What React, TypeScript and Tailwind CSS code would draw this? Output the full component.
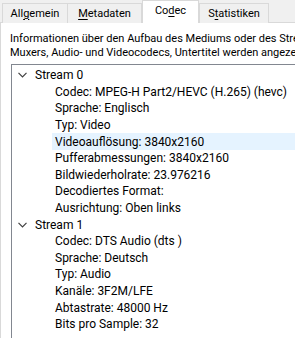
import React from "react";

type Row = { label: string; level: 0 | 1; selected?: boolean };

const rows: Row[] = [
  { label: "Stream 0", level: 0 },
  { label: "Codec: MPEG-H Part2/HEVC (H.265) (hevc)", level: 1 },
  { label: "Sprache: Englisch", level: 1 },
  { label: "Typ: Video", level: 1 },
  { label: "Videoauflösung: 3840x2160", level: 1, selected: true },
  { label: "Pufferabmessungen: 3840x2160", level: 1 },
  { label: "Bildwiederholrate: 23.976216", level: 1 },
  { label: "Decodiertes Format:", level: 1 },
  { label: "Ausrichtung: Oben links", level: 1 },
  { label: "Stream 1", level: 0 },
  { label: "Codec: DTS Audio (dts )", level: 1 },
  { label: "Sprache: Deutsch", level: 1 },
  { label: "Typ: Audio", level: 1 },
  { label: "Kanäle: 3F2M/LFE", level: 1 },
  { label: "Abtastrate: 48000 Hz", level: 1 },
  { label: "Bits pro Sample: 32", level: 1 },
];

const Chevron = () => (
  <svg width="9" height="6" viewBox="0 0 9 6" className="shrink-0">
    <path d="M0.5 0.8 L4.5 4.8 L8.5 0.8" fill="none" stroke="#404040" strokeWidth="1.2" />
  </svg>
);

const Tab = ({ label, u, active }: { label: string; u: number; active?: boolean }) => (
  <div
    className={
      active
        ? "relative z-10 h-[23px] w-[57px] bg-white border border-b-0 border-[#d9d9d9] flex items-center justify-center pb-[1px]"
        : "mt-[2px] h-[20px] bg-[#f0f0f0] border border-b-0 border-[#d9d9d9] flex items-center justify-center pt-[1px]"
    }
  >
    <span className="whitespace-nowrap">
      {label.slice(0, u)}
      <span className="underline underline-offset-[2px]">{label[u]}</span>
      {label.slice(u + 1)}
    </span>
  </div>
);

export default function App() {
  return (
    <div
      className="w-[295px] h-[338px] overflow-hidden bg-[#f0f0f0] text-[11px] text-black"
      style={{ fontFamily: 'Roboto, "Noto Sans", sans-serif' }}
    >
      <div className="flex items-end h-[23px] pl-[2px]">
        <div className="w-[66px]"><Tab label="Allgemein" u={3} /></div>
        <div className="w-[75px] -ml-[1px]"><Tab label="Metadaten" u={0} /></div>
        <Tab label="Codec" u={2} active />
        <div className="w-[70px]"><Tab label="Statistiken" u={1} /></div>
      </div>
      <div className="-mt-[1px] w-[360px] h-[330px] bg-white border border-[#d9d9d9]">
        <div className="pl-[9px] pt-[9px] leading-[14px] whitespace-nowrap">
          <div>Informationen über den Aufbau des Mediums oder des Streams, z. B. des</div>
          <div>Muxers, Audio- und Videocodecs, Untertitel werden angezeigt.</div>
        </div>
        <div className="ml-[10px] mt-[4px] h-[300px] border border-[#828790] bg-white pt-[2px] text-[12px]">
          {rows.map((r, i) => (
            <div key={i} className="h-[16.6px] flex items-center whitespace-nowrap">
              {r.level === 0 ? (
                <div className="flex items-center">
                  <div className="w-[23px] pl-[6px] flex items-center">
                    <Chevron />
                  </div>
                  <span>{r.label}</span>
                </div>
              ) : (
                <div className="flex items-center h-full w-full pl-[40px]">
                  <div
                    className={
                      r.selected
                        ? "h-full flex items-center w-full bg-[#e5f3ff] pl-[3px]"
                        : "h-full flex items-center w-full pl-[3px]"
                    }
                  >
                    {r.label}
                  </div>
                </div>
              )}
            </div>
          ))}
        </div>
      </div>
    </div>
  );
}
